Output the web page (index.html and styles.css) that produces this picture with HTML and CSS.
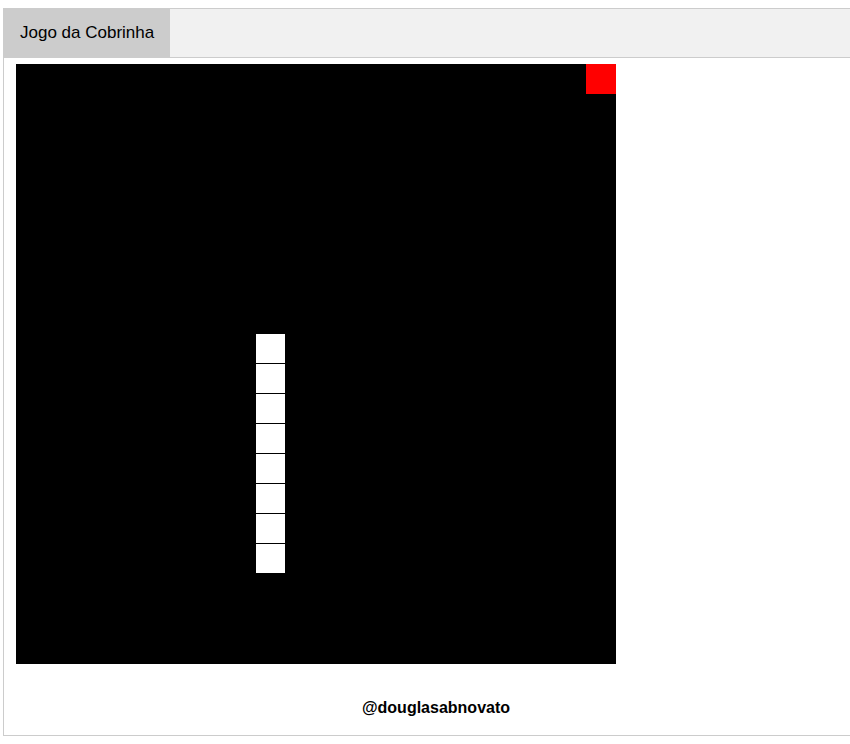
FILE: index.html
```html
<!DOCTYPE html>
<html lang="pt">
<head>
<meta charset="utf-8">
<title>Jogo da Cobrinha</title>
<link rel="stylesheet" href="styles.css">
</head>
<body>
<div class="page">
  <div class="tab">
    <button class="tablinks active">Jogo da Cobrinha</button>
  </div>
  <div class="tabcontent">
    <div class="board">
      <div class="food" style="grid-column: 20; grid-row: 1;"></div>
      <div class="cell" style="grid-column: 9; grid-row: 10;"></div>
      <div class="cell" style="grid-column: 9; grid-row: 11;"></div>
      <div class="cell" style="grid-column: 9; grid-row: 12;"></div>
      <div class="cell" style="grid-column: 9; grid-row: 13;"></div>
      <div class="cell" style="grid-column: 9; grid-row: 14;"></div>
      <div class="cell" style="grid-column: 9; grid-row: 15;"></div>
      <div class="cell" style="grid-column: 9; grid-row: 16;"></div>
      <div class="cell" style="grid-column: 9; grid-row: 17;"></div>
    </div>
    <p class="author">@douglasabnovato</p>
  </div>
</div>
</body>
</html>
```

FILE: styles.css
```css
html {
  overflow: hidden;
}
body {
  margin: 8px 0 0 3px;
  font-family: "Liberation Sans", Arial, sans-serif;
  background: #fff;
}
.page {
  width: 866px;
}
.tab {
  overflow: hidden;
  display: flex;
  border: 1px solid #ccc;
  background-color: #f1f1f1;
}
.tablinks {
  background-color: inherit;
  border: none;
  outline: none;
  margin: 0;
  padding: 14px 16px;
  font-family: "Liberation Sans", Arial, sans-serif;
  font-size: 17px;
  line-height: 20px;
  color: #000;
  cursor: pointer;
}
.tablinks.active {
  background-color: #ccc;
}
.tabcontent {
  padding: 6px 12px;
  border: 1px solid #ccc;
  border-top: none;
}
.board {
  width: 600px;
  height: 600px;
  background: #000;
  display: grid;
  grid-template-columns: repeat(20, 30px);
  grid-template-rows: repeat(20, 30px);
}
.cell {
  box-sizing: border-box;
  background: #fff;
  border-right: 1px solid #000;
  border-bottom: 1px solid #000;
}
.food {
  background: #f00;
}
.author {
  margin: 35px 0 12px;
  text-align: center;
  font-weight: bold;
  font-size: 16px;
  line-height: 18px;
  color: #000;
}
```
